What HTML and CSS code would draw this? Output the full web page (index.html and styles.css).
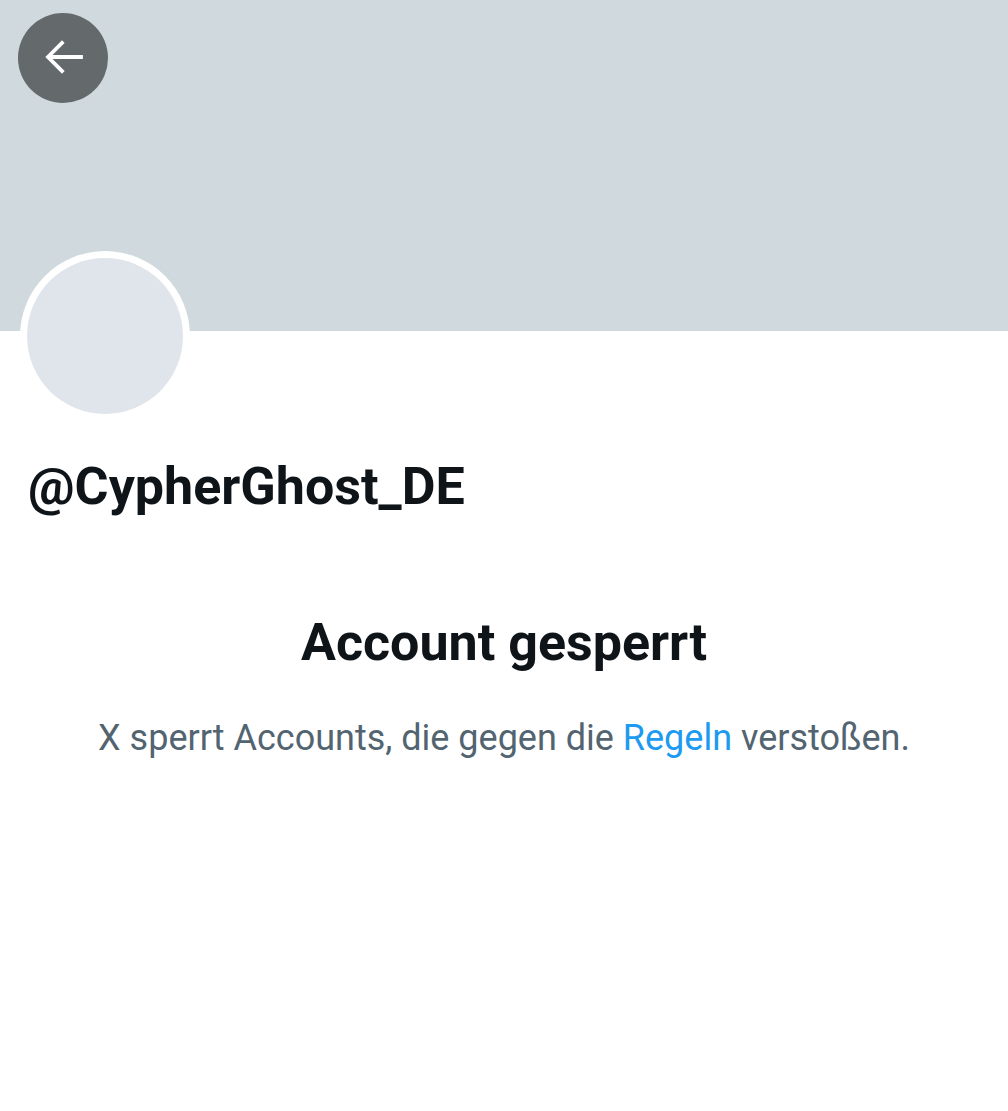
FILE: index.html
```html
<!DOCTYPE html>
<html lang="de">
<head>
<meta charset="utf-8">
<link rel="stylesheet" href="styles.css">
</head>
<body>
<div class="page">
  <header class="banner">
    <button class="back" aria-label="Zurück">
      <svg viewBox="0 0 40 40" width="40" height="40"><path d="M38 19H7M19 5L5 19L19 33" fill="none" stroke="#fff" stroke-width="3.8" stroke-linecap="square"/></svg>
    </button>
    <div class="avatar"><div class="avatar-inner"></div></div>
  </header>
  <section class="profile">
    <h1 class="handle">@CypherGhost_DE</h1>
  </section>
  <section class="notice">
    <h2 class="title">Account gesperrt</h2>
    <p class="desc">X sperrt Accounts, die gegen die <a class="link" href="#">Regeln</a> verstoßen.</p>
  </section>
</div>
</body>
</html>
```
FILE: styles.css
```css
html, body { margin: 0; padding: 0; background: #fff; }
body { font-family: Roboto, "Noto Sans", Arial, sans-serif; color: #0f1419; }
.page { width: 1008px; }
.banner { position: relative; height: 331px; background: #cfd9de; }
.back {
  position: absolute; left: 18px; top: 13px;
  width: 90px; height: 90px; border-radius: 50%; border: 0; padding: 0;
  background: #64696c; display: flex; align-items: center; justify-content: center;
}
.back svg { display: block; }
.avatar {
  position: absolute; left: 20px; top: 251px;
  width: 170px; height: 170px; border-radius: 50%; background: #fff;
  display: flex; align-items: center; justify-content: center;
}
.avatar-inner { width: 156px; height: 156px; border-radius: 50%; background: #dfe5ea; }
.profile { padding: 128px 28px 0; }
.handle { margin: 0; font-size: 52px; font-weight: 700; line-height: 56px; }
.notice { text-align: center; padding-top: 98px; }
.title { margin: 0; font-size: 52px; font-weight: 700; line-height: 60px; }
.desc { margin: 43px 0 0; font-size: 36px; color: #536471; line-height: 44px; }
.link { color: #1d9bf0; text-decoration: none; }
```
